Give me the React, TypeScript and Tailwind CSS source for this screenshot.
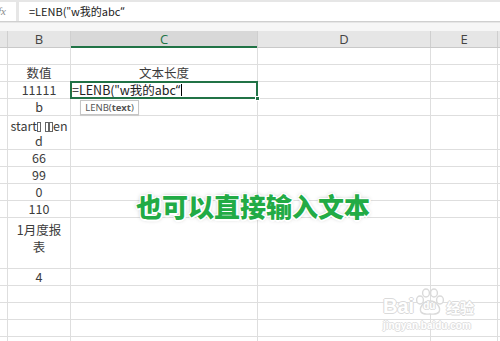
import React from "react";

type RowDef = { h: string; b?: React.ReactNode; c?: React.ReactNode; active?: boolean };

const Tofu = () => (
  <span className="inline-block w-[4px] h-[10px] border border-[#666] align-[-1px]" />
);

const Q = ({ children }: { children: React.ReactNode }) => (
  <span className="font-['Noto_Sans',sans-serif]">{children}</span>
);

const rows: RowDef[] = [
  { h: "h-[17px]" },
  { h: "h-[17px]", b: "数值", c: "文本长度" },
  { h: "h-[17px]", b: "11111", active: true },
  { h: "h-[17px]", b: "b" },
  {
    h: "h-[34px]",
    b: (
      <span className="leading-[15px]">
        start<Tofu />
        <span className="inline-block w-[4px]" />
        <Tofu />
        <Tofu />en
        <br />d
      </span>
    ),
  },
  { h: "h-[17px]", b: "66" },
  { h: "h-[17px]", b: "99" },
  { h: "h-[17px]", b: "0" },
  { h: "h-[17px]", b: "110" },
  {
    h: "h-[51px]",
    b: (
      <span className="self-start pt-[3px] leading-[17px]">
        1月度报
        <br />表
      </span>
    ),
  },
  { h: "h-[17px]", b: "4" },
  { h: "h-[17px]" },
  { h: "h-[17px]" },
  { h: "h-[17px]" },
  { h: "h-[17px]" },
];

const cellBase = "shrink-0 border-r border-b border-[#dedede] box-border";

function Paw() {
  return (
    <svg width="32" height="28" viewBox="0 0 32 28">
      <g fill="#fff" stroke="#dadada" strokeWidth="1.4">
        <ellipse cx="6" cy="12" rx="3.4" ry="4" />
        <ellipse cx="12" cy="5" rx="3.4" ry="4" />
        <ellipse cx="20" cy="5" rx="3.4" ry="4" />
        <ellipse cx="26" cy="12" rx="3.4" ry="4" />
        <path d="M16 13 C 9 13, 5 20, 7 24 C 9 27, 13 26, 16 26 C 19 26, 23 27, 25 24 C 27 20, 23 13, 16 13 Z" />
      </g>
    </svg>
  );
}

export default function App() {
  return (
    <div className="relative w-[500px] h-[341px] overflow-hidden bg-white font-['Noto_Sans_CJK_SC','Noto_Sans',sans-serif]">
      {/* formula bar area */}
      <div className="h-[31px] bg-[#f6f6f6] flex flex-col">
        <div className="h-[23px] bg-[#e6e6e6] pt-[2px] flex flex-col">
          <div className="flex h-[20px] gap-[3px] border-b border-[#cfcfcf]">
            <div className="w-[16px] bg-white overflow-hidden flex items-center">
              <span className="-ml-[2px] italic text-[11px] text-[#8a8a8a] font-['Liberation_Serif',serif]">fx</span>
            </div>
            <div className="flex-1 bg-white flex items-center pl-[10px] text-[11px] text-[#222]">
              =LENB(<Q>"</Q>w我的abc<Q>“</Q>
            </div>
          </div>
        </div>
      </div>

      {/* column header */}
      <div className="flex h-[17px] border-b border-[#c9c9c9] bg-[#e6e6e6] text-[13px] text-[#444] font-['Open_Sans',sans-serif]">
        <div className="w-[8px] shrink-0 border-r border-[#cfcfcf]" />
        <div className="w-[63px] shrink-0 border-r border-[#cfcfcf] flex items-center justify-center leading-none">B</div>
        <div className="w-[187px] shrink-0 border-r border-[#cfcfcf] bg-[#d8d8d8] text-[#217346] flex items-center justify-center leading-none relative">
          C
          <div className="absolute left-0 right-0 -bottom-[1px] h-[2px] bg-[#217346]" />
        </div>
        <div className="w-[173px] shrink-0 border-r border-[#cfcfcf] flex items-center justify-center leading-none">D</div>
        <div className="w-[67px] shrink-0 border-r border-[#cfcfcf] flex items-center justify-center leading-none">E</div>
        <div className="flex-1" />
      </div>

      {/* rows */}
      <div className="flex flex-col text-[12.5px] text-[#3c3c3c]">
        {rows.map((r, i) => (
          <div key={i} className={`flex ${r.h}`}>
            <div className={`${cellBase} w-[8px]`} />
            <div className={`${cellBase} w-[63px] flex items-center justify-center text-center leading-[16px]`}>
              {r.b}
            </div>
            <div className={`${cellBase} w-[187px] relative flex items-center ${r.active ? "" : "justify-center"}`}>
              {r.c}
              {r.active && (
                <>
                  <div className="absolute -left-[1px] -top-[1px] w-[188px] h-[18px] border-2 border-[#217346] z-10" />
                  <div className="absolute -right-[3px] -bottom-[3px] w-[5px] h-[5px] bg-[#217346] border border-white z-20" />
                  <span className="pl-[1px] text-[12.5px] text-[#222] leading-none flex items-center">
                    =LENB(<Q>"</Q>w我的abc<Q>“</Q>
                    <span className="inline-block w-[1px] h-[12px] bg-black ml-[1px]" />
                  </span>
                  <div className="absolute left-[9px] top-[18px] z-30 w-[59px] h-[15px] bg-white border border-[#c6c6c6] shadow-[0_1px_1px_rgba(0,0,0,0.08)] flex items-center justify-center text-[9.5px] text-[#555] font-['Noto_Sans',sans-serif] leading-none">
                    LENB(<b className="font-bold">text</b>)
                  </div>
                </>
              )}
            </div>
            <div className={`${cellBase} w-[173px]`} />
            <div className={`${cellBase} w-[67px]`} />
            <div className="flex-1 border-b border-[#dedede]" />
          </div>
        ))}
      </div>

      {/* overlay caption */}
      <div className="absolute left-[136px] top-[191px] text-[26px] leading-[30px] font-black text-[#22ab45] whitespace-nowrap [text-shadow:1px_1px_0_#fff,-1px_-1px_0_#fff,1px_-1px_0_#fff,-1px_1px_0_#fff,0_2px_0_#fff,2px_0_0_#fff,0_0_4px_rgba(0,0,0,0.35)]">
        也可以直接输入文本
      </div>

      {/* watermark */}
      <div className="absolute left-[383px] top-[287px] flex flex-col items-start">
        <div className="flex items-end h-[29px]">
          <span className="text-[20px] leading-[20px] font-bold text-white font-['Liberation_Sans',sans-serif] [text-shadow:1px_0_0_#dadada,-1px_0_0_#dadada,0_1px_0_#dadada,0_-1px_0_#dadada]">
            Bai
          </span>
          <div className="relative w-[32px] h-[28px]">
            <Paw />
            <span className="absolute left-[9px] top-[13px] text-[10px] leading-none font-bold text-white font-['Liberation_Sans',sans-serif] [text-shadow:1px_0_0_#dadada,-1px_0_0_#dadada,0_1px_0_#dadada,0_-1px_0_#dadada]">
              du
            </span>
          </div>
          <span className="text-[14px] leading-[18px] font-bold text-white [text-shadow:1px_0_0_#dadada,-1px_0_0_#dadada,0_1px_0_#dadada,0_-1px_0_#dadada]">
            经验
          </span>
        </div>
        <span className="mt-[4px] text-[10px] leading-[12px] font-bold text-white font-['Liberation_Sans',sans-serif] [text-shadow:1px_0_0_#e0e0e0,-1px_0_0_#e0e0e0,0_1px_0_#e0e0e0,0_-1px_0_#e0e0e0]">
          jingyan.baidu.com
        </span>
      </div>
    </div>
  );
}
